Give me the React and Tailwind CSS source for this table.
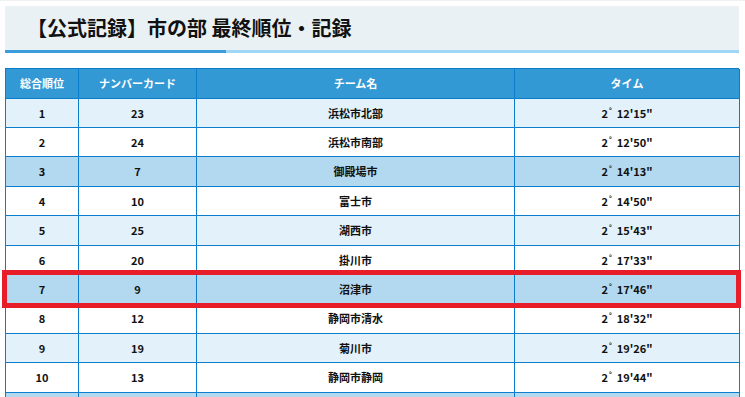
import React from 'react';

const rows = [
    ['1', '23', '浜松市北部', "12'15\""],
    ['2', '24', '浜松市南部', "12'50\""],
    ['3', '7', '御殿場市', "14'13\""],
    ['4', '10', '富士市', "14'50\""],
    ['5', '25', '湖西市', "15'43\""],
    ['6', '20', '掛川市', "17'33\""],
    ['7', '9', '沼津市', "17'46\""],
    ['8', '12', '静岡市清水', "18'32\""],
    ['9', '19', '菊川市', "19'26\""],
    ['10', '13', '静岡市静岡', "19'44\""],
];

const cols = 'grid grid-cols-[73px_118px_318px_225px]';
const cell = 'h-[29.4px] flex items-center justify-center border-r border-b border-[#0a7dcd]';

export default () => {

    const rowBg = (i) => {
        if (i % 4 === 2) return 'bg-[#b3d9f0]';
        if (i % 2 === 0) return 'bg-[#e3f1fa]';
        return 'bg-white';
    }

    return (
        <div className="w-[745px] h-[397px] overflow-hidden bg-white border-t border-[#f0f0f0] font-['Noto_Sans_CJK_JP',sans-serif]">
            <div className="mt-[5px] ml-[5px] w-[734px]">
                <div className="h-[44px] bg-[#e9f1f5] flex items-center pl-[22px]">
                    <h1 className="text-[20px] font-bold text-[#111] leading-none">【公式記録】市の部 最終順位・記録</h1>
                </div>
                <div className="flex h-[3px]">
                    <div className="w-[221px] bg-[#3c9ddd]"></div>
                    <div className="flex-1 bg-[#a0d6f6]"></div>
                </div>

                <div className="mt-[15px] border-l border-t border-[#0a7dcd] text-[11px] font-bold">
                    <div className={cols + " bg-[#3399d5] text-white"}>
                        {['総合順位', 'ナンバーカード', 'チーム名', 'タイム'].map(h => (
                            <div key={h} className="h-[29.7px] flex items-center justify-center border-r border-b border-[#0a7dcd]">{h}</div>
                        ))}
                    </div>
                    {
                        rows.map((r, i) => (
                            <div key={r[0]} className={cols + " relative text-[#111] " + rowBg(i)}>
                                <div className={cell}>{r[0]}</div>
                                <div className={cell}>{r[1]}</div>
                                <div className={cell}>{r[2]}</div>
                                <div className={cell}>
                                    <span>2</span>
                                    <span className="text-[7px] leading-none self-start mt-[8px] ml-[1px]">°</span>
                                    <span className="ml-[5px]">{r[3]}</span>
                                </div>
                                {r[0] === '7' && (
                                    <div className="absolute z-10 -left-[4px] -right-[2px] -top-[5px] -bottom-[4px] border-[5px] border-[#e81d2a]"></div>
                                )}
                            </div>
                        ))
                    }
                    <div className={cols + " bg-[#b3d9f0]"}>
                        <div className={cell}></div>
                        <div className={cell}></div>
                        <div className={cell}></div>
                        <div className={cell}></div>
                    </div>
                </div>
            </div>
        </div>
    )
};
